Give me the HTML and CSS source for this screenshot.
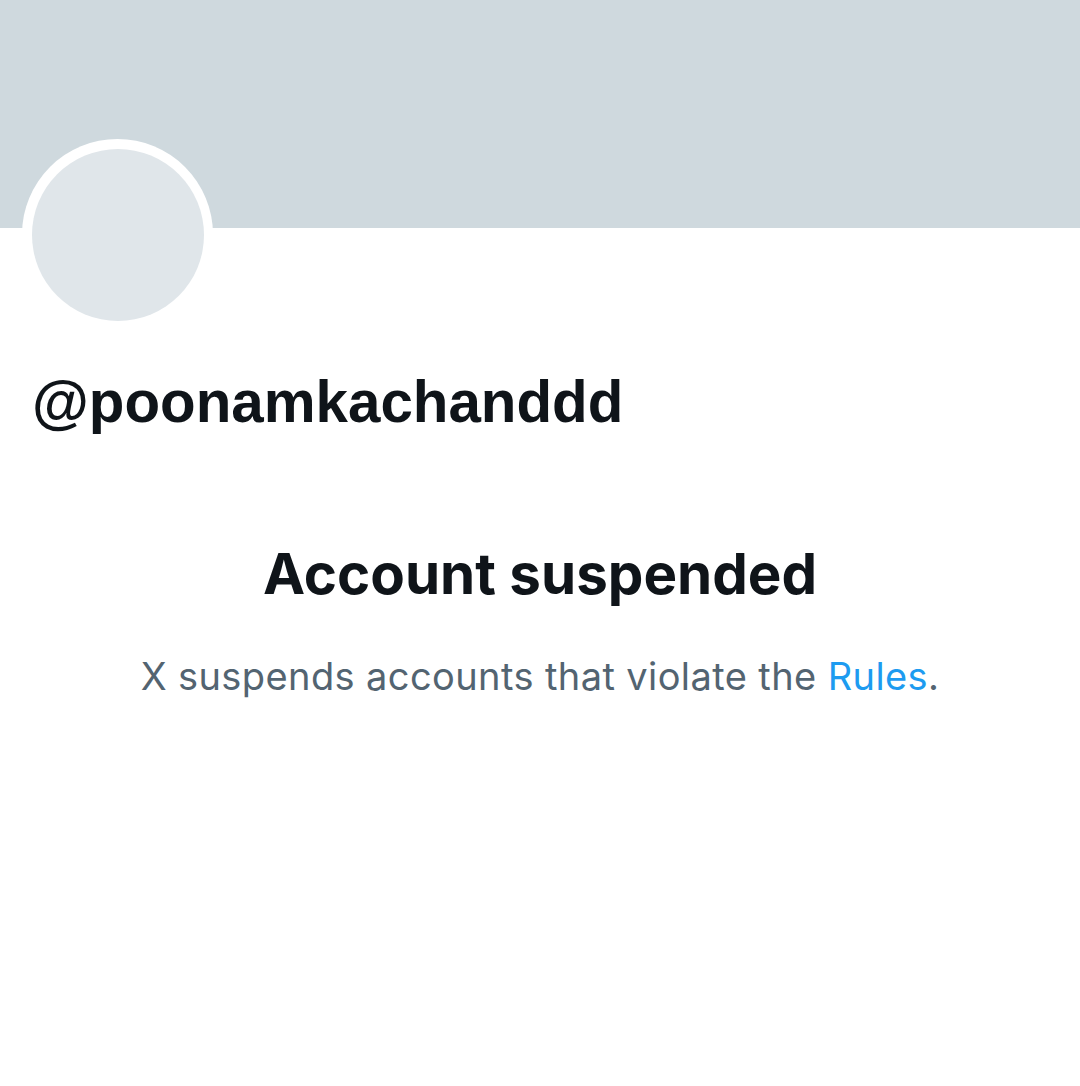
FILE: index.html
```html
<!DOCTYPE html>
<html>
<head>
<meta charset="utf-8">
<link rel="stylesheet" href="styles.css">
</head>
<body>
<div class="page">
  <div class="banner"></div>
  <div class="profile">
    <div class="avatar-row">
      <div class="avatar"><div class="avatar-inner"></div></div>
    </div>
    <div class="handle">@poonamkachanddd</div>
  </div>
  <div class="notice">
    <h1 class="title">Account suspended</h1>
    <p class="desc">X suspends accounts that violate the <a class="link" href="#">Rules</a>.</p>
  </div>
</div>
</body>
</html>
```

FILE: styles.css
```css
html, body {
  margin: 0;
  padding: 0;
  background: #ffffff;
}
body {
  width: 1080px;
  height: 1086px;
  overflow: hidden;
  font-family: "Liberation Sans", Arial, sans-serif;
  color: #0f1419;
}
.banner {
  height: 228px;
  background: #cfd9de;
}
.profile {
  padding: 0 0 0 22px;
}
.avatar-row {
  height: 112px;
  position: relative;
}
.avatar {
  position: absolute;
  left: 0;
  top: -89px;
  width: 191px;
  height: 191px;
  border-radius: 50%;
  background: #ffffff;
  display: flex;
  align-items: center;
  justify-content: center;
}
.avatar-inner {
  width: 172px;
  height: 172px;
  border-radius: 50%;
  background: #e0e6ea;
}
.handle {
  margin-left: 10px;
  font-size: 58.3px;
  font-weight: 700;
  line-height: 70px;
  margin-top: 27px;
  color: #0f1419;
}
.notice {
  display: flex;
  flex-direction: column;
  align-items: center;
  margin-top: 104px;
}
.title {
  margin: 0;
  font-family: Inter, "Liberation Sans", sans-serif;
  font-size: 56.5px;
  font-weight: 700;
  line-height: 66px;
  color: #0f1419;
}
.desc {
  margin: 46px 0 0;
  font-family: Inter, "Liberation Sans", sans-serif;
  font-size: 38px;
  letter-spacing: 0.4px;
  line-height: 46px;
  color: #536471;
}
.link {
  color: #1d9bf0;
  text-decoration: none;
}
```
